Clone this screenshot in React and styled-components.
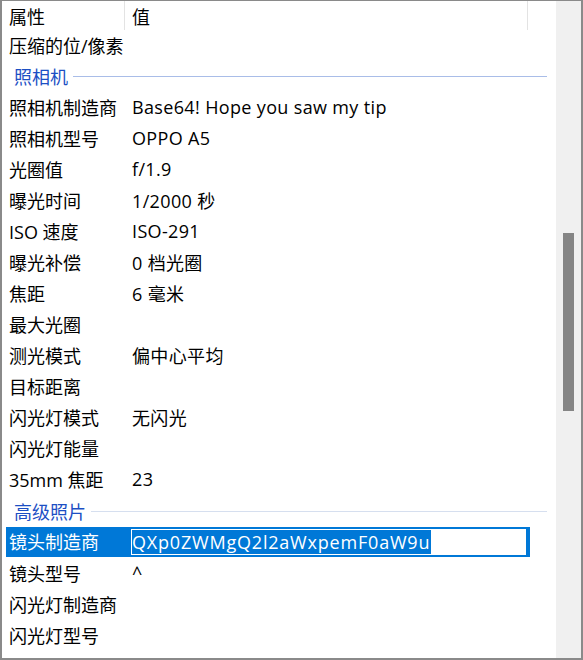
import styled, { createGlobalStyle } from "styled-components";

const GlobalStyle = createGlobalStyle`
  html, body {
    margin: 0;
    padding: 0;
    background: #ffffff;
  }
  body {
    font-family: "Segoe UI", "Open Sans", "Noto Sans CJK SC", sans-serif;
  }
`;

const cameraRows = [
  ["照相机制造商", "Base64! Hope you saw my tip"],
  ["照相机型号", "OPPO A5"],
  ["光圈值", "f/1.9"],
  ["曝光时间", "1/2000 秒"],
  ["ISO 速度", "ISO-291"],
  ["曝光补偿", "0 档光圈"],
  ["焦距", "6 毫米"],
  ["最大光圈", ""],
  ["测光模式", "偏中心平均"],
  ["目标距离", ""],
  ["闪光灯模式", "无闪光"],
  ["闪光灯能量", ""],
  ["35mm 焦距", "23"],
];

const advancedRows = [
  ["镜头型号", "^"],
  ["闪光灯制造商", ""],
  ["闪光灯型号", ""],
];

export default function App() {
  return (
    <>
      <GlobalStyle />
      <Frame>
        <List>
          <Header>
            <HeaderCell width={123}>属性</HeaderCell>
            <HeaderCell width={403}>值</HeaderCell>
          </Header>
          <Row>
            <Label>压缩的位/像素</Label>
            <Value></Value>
          </Row>
          <Group>
            <GroupTitle>照相机</GroupTitle>
            <GroupLine color="#a9bde8" />
          </Group>
          {cameraRows.map(([k, v], i) => (
            <Row key={i}>
              <Label>{k}</Label>
              <Value>{v}</Value>
            </Row>
          ))}
          <Group offset={1}>
            <GroupTitle>高级照片</GroupTitle>
            <GroupLine color="#d6dfef" />
          </Group>
          <SelectedRow>
            <SelectedLabel>镜头制造商</SelectedLabel>
            <EditBox>
              <Selection>QXp0ZWMgQ2l2aWxpemF0aW9u</Selection>
            </EditBox>
          </SelectedRow>
          {advancedRows.map(([k, v], i) => (
            <Row key={i}>
              <Label>{k}</Label>
              <Value>{v}</Value>
            </Row>
          ))}
        </List>
        <ScrollTrack>
          <Thumb />
        </ScrollTrack>
      </Frame>
    </>
  );
}

const Frame = styled.div`
  width: 583px;
  height: 660px;
  box-sizing: border-box;
  border-top: 1px solid #8a8a8a;
  border-left: 2px solid #8a8a8a;
  border-right: 2px solid #8a8a8a;
  border-bottom: 2px solid #8a8a8a;
  display: flex;
  overflow: hidden;
  background: #ffffff;
`;

const List = styled.div`
  flex: 1;
  display: flex;
  flex-direction: column;
  overflow: hidden;
  color: #000000;
  font-size: 18px;
`;

const Header = styled.div`
  display: flex;
  height: 29px;
  flex-shrink: 0;
`;

const HeaderCell = styled.div`
  width: ${(p) => p.width}px;
  box-sizing: border-box;
  padding: 3px 0 0 7px;
  border-right: 1px solid #e3e3e3;
  line-height: 26px;
`;

const Row = styled.div`
  display: flex;
  align-items: center;
  height: 31px;
  box-sizing: border-box;
  padding-bottom: 2px;
  flex-shrink: 0;
  white-space: nowrap;
`;

const Label = styled.div`
  width: 123px;
  padding-left: 7px;
  box-sizing: border-box;
`;

const Value = styled.div`
  padding-left: 7px;
  letter-spacing: 0.35px;
`;

const Group = styled.div`
  display: flex;
  align-items: center;
  height: 31px;
  box-sizing: border-box;
  padding: 0 9px 2px 12px;
  flex-shrink: 0;
  margin-top: ${(p) => p.offset || 0}px;
  gap: 5px;
`;

const GroupTitle = styled.div`
  color: #1c4fc4;
  white-space: nowrap;
`;

const GroupLine = styled.div`
  flex: 1;
  height: 1px;
  margin-top: 2px;
  background: ${(p) => p.color};
`;

const SelectedRow = styled.div`
  display: flex;
  align-items: center;
  height: 30px;
  margin: 0 26px 1px 4px;
  background: #0078d7;
  flex-shrink: 0;
  white-space: nowrap;
`;

const SelectedLabel = styled.div`
  width: 119px;
  padding: 0 0 2px 3px;
  box-sizing: border-box;
  color: #ffffff;
`;

const EditBox = styled.div`
  display: flex;
  align-items: center;
  margin-left: 6px;
  width: 395px;
  height: 26px;
  box-sizing: border-box;
  background: #ffffff;
  padding: 1px;
`;

const Selection = styled.span`
  background: #0078d7;
  color: #ffffff;
  line-height: 24px;
  padding-right: 1px;
  letter-spacing: 0.8px;
`;

const ScrollTrack = styled.div`
  width: 25px;
  flex-shrink: 0;
  background: #f0f0f0;
  display: flex;
  justify-content: center;
  padding-top: 232px;
  box-sizing: border-box;
`;

const Thumb = styled.div`
  width: 11px;
  height: 178px;
  background: #858585;
`;
